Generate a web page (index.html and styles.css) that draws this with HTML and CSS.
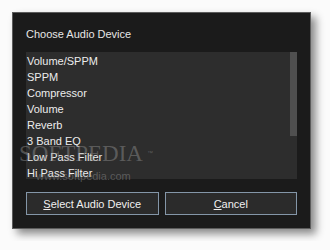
FILE: index.html
```html
<!DOCTYPE html>
<html lang="en">
<head>
    <meta charset="UTF-8">
    <title>Choose Audio Device</title>
    <link rel="stylesheet" href="styles.css">
</head>
<body>

    <div class="dialog">
        <div class="title">Choose Audio Device</div>

        <div class="list">
            <ul class="items">
                <li>Volume/SPPM</li>
                <li>SPPM</li>
                <li>Compressor</li>
                <li>Volume</li>
                <li>Reverb</li>
                <li>3 Band EQ</li>
                <li>Low Pass Filter</li>
                <li>Hi Pass Filter</li>
            </ul>
            <div class="scrollbar">
                <div class="thumb"></div>
            </div>
        </div>

        <div class="buttons">
            <button class="btn"><u>S</u>elect Audio Device</button>
            <button class="btn"><u>C</u>ancel</button>
        </div>

        <!-- marca d'agua -->
        <div class="watermark">
            <div class="wm-logo">SOFTPEDIA<span class="wm-tm">™</span></div>
            <div class="wm-url">www.softpedia.com</div>
        </div>
    </div>

</body>
</html>
```

FILE: styles.css
```css
body {
    margin: 0;
    padding: 12px;
    background: #fbfbfb;
    font-family: 'Liberation Sans', Arial, sans-serif;
    font-size: 11px;
    color: #e8e8e8;
}

.dialog {
    position: relative;
    width: 271px;
    height: 189px;
    padding: 13px 13px 13px 13px;
    background-color: #1b1b1b;
    border: 1px solid #5c5c5c;
    box-shadow: 5px 5px 8px rgba(0, 0, 0, 0.45);
    display: flex;
    flex-direction: column;
}

.title {
    line-height: 16px;
    margin-bottom: 10px;
    color: #e6e6e6;
}

.list {
    height: 127px;
    background-color: #2d2d2d;
    display: flex;
}

.items {
    flex: 1;
    list-style: none;
    margin: 0;
    padding: 1px 0 0 1px;
}

.items li {
    line-height: 16px;
    color: #ececec;
}

.scrollbar {
    width: 7px;
}

.thumb {
    height: 84px;
    background-color: #4f4f4f;
}

.buttons {
    display: flex;
    gap: 6px;
    margin-top: 13px;
}

.btn {
    flex: 1;
    height: 23px;
    background-color: #2b2b2b;
    border: 1px solid #8496a8;
    color: #f0f0f0;
    font-family: 'Liberation Sans', Arial, sans-serif;
    font-size: 11px;
    padding: 0;
}

.watermark {
    position: absolute;
    left: 6px;
    top: 129px;
    color: rgba(150, 150, 150, 0.45);
    pointer-events: none;
}

.wm-logo {
    font-family: 'Liberation Serif', serif;
    font-size: 23px;
    line-height: 23px;
}

.wm-tm {
    font-family: 'Liberation Sans', sans-serif;
    font-size: 6px;
    vertical-align: top;
    margin-left: 4px;
}

.wm-url {
    margin: 5px 0 0 17px;
    font-size: 11px;
    line-height: 13px;
}
```
